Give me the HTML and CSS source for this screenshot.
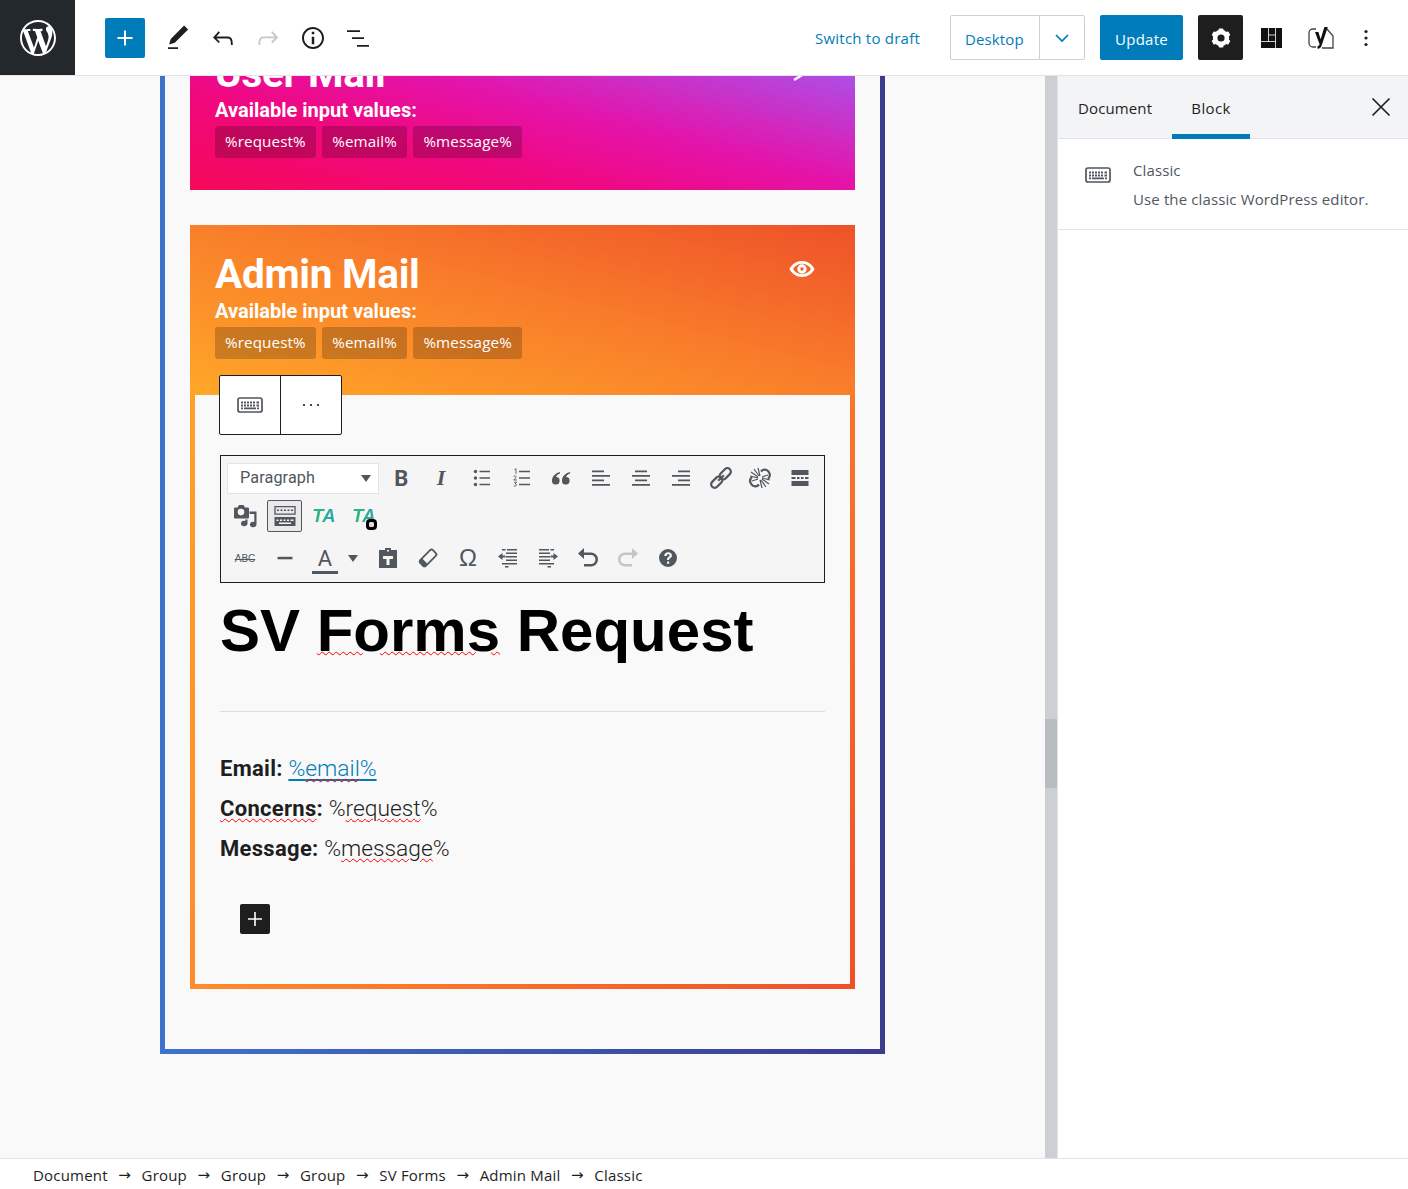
FILE: index.html
```html
<!DOCTYPE html>
<html lang="en">
<head>
<meta charset="utf-8">
<title>Edit Form</title>
<link rel="stylesheet" href="styles.css">
</head>
<body>
<header class="topbar">
  <a class="logo"><svg viewBox="0 0 20 20" width="36" height="36"><path fill="#fff" d="M20 10c0-5.51-4.49-10-10-10C4.48 0 0 4.49 0 10c0 5.52 4.48 10 10 10 5.51 0 10-4.48 10-10zM7.78 15.37L4.37 6.22c.55-.02 1.17-.08 1.17-.08.5-.06.44-1.13-.06-1.11 0 0-1.45.11-2.37.11-.18 0-.37 0-.58-.01C4.12 2.69 6.87 1.11 10 1.11c2.33 0 4.45.87 6.05 2.34-.68-.11-1.65.39-1.65 1.58 0 .74.45 1.36.9 2.1.35.61.55 1.36.55 2.46 0 1.49-1.4 5-1.4 5l-3.03-8.37c.54-.02.82-.17.82-.17.5-.05.44-1.25-.06-1.22 0 0-1.44.12-2.38.12-.87 0-2.33-.12-2.33-.12-.5-.03-.56 1.2-.06 1.22l.92.08 1.26 3.41zM17.41 10c.24-.64.74-1.87.43-4.25.7 1.29 1.05 2.71 1.05 4.25 0 3.29-1.73 6.24-4.4 7.78.97-2.59 1.94-5.2 2.92-7.78zM6.1 18.09C3.12 16.65 1.11 13.53 1.11 10c0-1.3.23-2.48.72-3.59C3.25 10.3 4.67 14.2 6.1 18.09zm4.03-6.63l2.58 6.98c-.86.29-1.76.45-2.71.45-.79 0-1.57-.11-2.29-.33.81-2.38 1.62-4.74 2.42-7.1z"/></svg></a>
  <div class="tools">
    <button class="inserter"><svg viewBox="0 0 24 24" width="30" height="30"><path fill="#fff" d="M18 11.2h-5.200V6h-1.600v5.200H6v1.600h5.200V18h1.600v-5.200H18z"/></svg></button>
    <span class="tool"><svg viewBox="0 0 24 24" width="30" height="30"><path d="M20.1 5.1L16.9 2 6.2 12.7l-1.3 4.4 4.5-1.3L20.1 5.1zM4 20.8h8v-1.5H4v1.500z"/></svg></span>
    <span class="tool"><svg viewBox="0 0 24 24" width="30" height="30"><path d="M18.3 11.7c-.6-.6-1.4-.9-2.3-.9H6.700l2.900-3.300-1.100-1-4.500 5L8.500 16l1-1-2.700-2.700H16c.5 0 .9.2 1.300.5 1 1 1 3.400 1 4.500v.3h1.500v-.2c0-1.500 0-4.300-1.500-5.700z"/></svg></span>
    <span class="tool is-off"><svg viewBox="0 0 24 24" width="30" height="30"><path d="M15.6 6.5l-1.1 1 2.900 3.300H8c-.9 0-1.700.3-2.300.9-1.400 1.500-1.400 4.200-1.400 5.600v.2h1.500v-.3c0-1.100 0-3.500 1-4.500.3-.3.7-.5 1.300-.5h9.200L14.500 15l1.100 1.100 4.600-4.600-4.600-5z"/></svg></span>
    <span class="tool"><svg viewBox="0 0 24 24" width="30" height="30"><path d="M12 3.2c-4.800 0-8.800 3.900-8.800 8.800 0 4.800 3.900 8.800 8.800 8.800 4.800 0 8.800-3.900 8.800-8.800 0-4.800-4-8.800-8.800-8.800zm0 16c-4 0-7.200-3.300-7.200-7.200C4.800 8 8 4.800 12 4.800s7.200 3.300 7.200 7.200c0 4-3.200 7.200-7.200 7.200zM11 17h2v-6h-2v6zm0-8h2V7h-2v2z"/></svg></span>
    <span class="tool"><svg viewBox="0 0 30 30" width="30" height="30"><path d="M4 7.200h13v1.700H4zM9 14.200h12v1.700H9zM14 22h12v1.700H14z"/></svg></span>
  </div>
  <div class="actions">
    <a class="draft">Switch to draft</a>
    <div class="preview"><span class="preview-label">Desktop</span><span class="preview-arrow"><svg viewBox="0 0 16 16" width="16" height="16"><path d="M2 5l6 6 6-6" fill="none" stroke="#007cba" stroke-width="1.700"/></svg></span></div>
    <button class="update">Update</button>
    <span class="settings"><svg viewBox="0 0 24 24" width="24" height="24"><g fill="#fff"><circle cx="12" cy="12" r="6" fill="none" stroke="#fff" stroke-width="4.400"/><rect x="9.600" y="2.400" width="4.800" height="19.200" rx="1"/><rect x="9.600" y="2.400" width="4.800" height="19.200" rx="1" transform="rotate(60 12 12)"/><rect x="9.600" y="2.400" width="4.800" height="19.200" rx="1" transform="rotate(120 12 12)"/></g><circle cx="12" cy="12" r="3.600" fill="#1e1e1e"/></svg></span>
    <span class="plugin-layout"><svg viewBox="0 0 21 20" width="21" height="20"><path fill="#111" d="M0 0h21v20H0z"/><path fill="none" stroke="#fff" stroke-width=".8" d="M7.500 0v13.500M14.500 0v20M0 13.500h14.500M7.500 7h7"/></svg></span>
    <span class="plugin-yoast"><svg viewBox="0 0 26 24" width="26" height="24"><path fill="none" stroke="#444" stroke-width="1.300" d="M8 3H5a4 4 0 0 0-4 4v10a4 4 0 0 0 4 4h3M19 3l6 7v12H14"/><path fill="#111" d="M7 6h3.400l2.200 7.200L16.400 1h3.400l-6 18c-.7 2.300-1.800 3.500-4.300 3.800v-2.600c1.100-.2 1.700-.8 2.100-1.900L7 6z"/></svg></span>
    <span class="more"><svg viewBox="0 0 6 20" width="6" height="20"><circle cx="3" cy="3.500" r="1.600"/><circle cx="3" cy="10" r="1.600"/><circle cx="3" cy="16.500" r="1.600"/></svg></span>
  </div>
</header>

<main class="main">
  <div class="canvas">
    <section class="outer">
      <article class="card">
        <div class="card-head card-head-pink">
          <div class="head-row">
            <h2 class="card-title">User Mail</h2>
            <svg class="eye" viewBox="0 0 26 16" width="26" height="16"><use href="#eye"/><path d="M18 12L5 20" stroke="#fff" stroke-width="2.500"/></svg>
          </div>
          <p class="card-sub">Available input values:</p>
          <div class="chips"><span class="chip">%request%</span><span class="chip">%email%</span><span class="chip">%message%</span></div>
        </div>
      </article>

      <article class="card card-admin">
        <div class="card-head card-head-orange">
          <div class="head-row">
            <h2 class="card-title">Admin Mail</h2>
            <svg class="eye" viewBox="0 0 26 16" width="26" height="16"><use href="#eye"/></svg>
          </div>
          <p class="card-sub">Available input values:</p>
          <div class="chips"><span class="chip">%request%</span><span class="chip">%email%</span><span class="chip">%message%</span></div>
        </div>
        <div class="card-body">
          <div class="block-toolbar">
            <span class="block-tool"><svg viewBox="0 0 26 16" width="26" height="16"><use href="#kbd"/></svg></span>
            <span class="block-tool"><svg viewBox="0 0 20 4" width="20" height="4"><circle cx="3" cy="2" r="1.100"/><circle cx="10" cy="2" r="1.100"/><circle cx="17" cy="2" r="1.100"/></svg></span>
          </div>

          <div class="mce">
            <div class="mce-row">
              <div class="mce-select"><span>Paragraph</span><i class="caret"></i></div>
              <span class="mi mi-b">B</span>
              <span class="mi mi-i">I</span>
              <span class="mi"><svg viewBox="0 0 20 20" width="20" height="20"><circle cx="3.500" cy="3.500" r="1.700"/><circle cx="3.500" cy="10" r="1.700"/><circle cx="3.500" cy="16.500" r="1.700"/><path d="M7.500 3.500H18M7.500 10H18M7.500 16.500H18" stroke="#50575e" stroke-width="1.400"/></svg></span>
              <span class="mi"><svg viewBox="0 0 20 20" width="20" height="20"><path d="M7 3.500h11M7 10h11M7 16.500h11" stroke="#50575e" stroke-width="1.400"/><path d="M2.500 1.500l1.500-.7v5M1.500 8.300c1.800-1.200 3.400.3 2 1.900L1.700 12H5M2 14.300h2.600l-1.300 1.500c1.600 0 1.800 2.800-1.500 2.200" fill="none" stroke="#50575e" stroke-width=".9"/></svg></span>
              <span class="mi"><svg viewBox="0 0 20 20" width="20" height="20"><path d="M9 4C5 5 1 8 1 12.500a3.800 3.800 0 1 0 4-3.500c.5-1.500 2-3 4-3.500zM19 4c-4 1-8 4-8 8.500a3.800 3.800 0 1 0 4-3.500c.5-1.500 2-3 4-3.500z"/></svg></span>
              <span class="mi"><svg viewBox="0 0 20 20" width="20" height="20"><path d="M1 2.500h12v1.800H1zM1 7h18v1.800H1zM1 11.500h12v1.800H1zM1 16h18v1.800H1z"/></svg></span>
              <span class="mi"><svg viewBox="0 0 20 20" width="20" height="20"><path d="M4 2.500h12v1.800H4zM1 7h18v1.800H1zM4 11.500h12v1.800H4zM1 16h18v1.800H1z"/></svg></span>
              <span class="mi"><svg viewBox="0 0 20 20" width="20" height="20"><path d="M7 2.500h12v1.800H7zM1 7h18v1.800H1zM7 11.500h12v1.800H7zM1 16h18v1.800H1z"/></svg></span>
              <span class="mi"><svg viewBox="0 0 22 22" width="22" height="22"><g fill="none" stroke="#50575e" stroke-width="2.200" transform="rotate(-45 11 11)"><rect x="-1.500" y="7.500" width="13" height="7" rx="3.500"/><rect x="10.500" y="7.500" width="13" height="7" rx="3.500"/><path d="M7 11h8"/></g></svg></span>
              <span class="mi"><svg viewBox="0 0 22 22" width="22" height="22"><g fill="none" stroke="#50575e" stroke-width="2.200"><path d="M3 10c-3 3-2 6 0 8s5 2 7-.5M19 12c3-3 2-6 0-8s-5-2-7 .5"/></g><path stroke="#50575e" stroke-width="1.200" d="M5 2l5 7M2 5l7 5M1 9l8 2M9 1l2 8M17 20l-5-7M20 17l-7-5M21 13l-8-2M13 21l-2-8M19 8l-6 2M3 14l6-2"/></svg></span>
              <span class="mi"><svg viewBox="0 0 20 20" width="20" height="20"><path d="M1.500 2h17v5h-17zM1.500 13h17v5h-17zM1.500 9h4v2h-4zM7 9h2.500v2H7zM11 9h2.500v2H11zM15 9h3.500v2H15z"/></svg></span>
            </div>
            <div class="mce-row">
              <span class="mi"><svg viewBox="0 0 24 22" width="24" height="22"><path fill-rule="evenodd" d="M1.500 2.500h3L6 0h4.500l1.500 2.500h3a1 1 0 0 1 1 1V12.500a1 1 0 0 1-1 1h-13a1 1 0 0 1-1-1v-9a1 1 0 0 1 1-1zM8 3.800a3.300 3.300 0 1 0 0 6.600 3.300 3.300 0 0 0 0-6.600z"/><path d="M16.500 6.500h7v13a3.300 2.800 0 1 1-2.200-2.600V9h-4.800z"/><path d="M14.500 18.500a3.300 2.800 0 1 1-2.200-2.600V14.500h2.200z"/></svg></span>
              <span class="mi mi-on"><svg viewBox="0 0 24 24" width="24" height="24"><path fill="none" stroke="#50575e" stroke-width="1.300" d="M2 2.600h20v7.500H2z"/><path d="M1.500 13h21v9h-21z"/><path fill="#f5f5f5" d="M3.500 15.500h2v1.500h-2zM7 15.500h2v1.500H7zM10.500 15.500h2v1.500h-2zM14 15.500h2v1.500h-2zM17.500 15.500h3v1.500h-3zM6 18.500h12v1.500H6z"/><path d="M4 5.500h2v1.500H4zM7.500 5.500h2v1.500h-2zM11 5.500h2v1.500h-2zM14.500 5.500h2v1.500h-2zM18 5.500h2v1.500h-2z"/></svg></span>
              <span class="mi mi-ta"><span class="ta-text">TA</span></span>
              <span class="mi mi-ta"><span class="ta-text">TA</span><i class="ta-badge"></i></span>
            </div>
            <div class="mce-row mce-row-last">
              <span class="mi mi-abc">ABC</span>
              <span class="mi"><svg viewBox="0 0 20 20" width="20" height="20"><path d="M2.500 8.800h15v2.500h-15z"/></svg></span>
              <span class="mi mi-a">A</span>
              <i class="caret caret-a"></i>
              <span class="mi"><svg viewBox="0 0 22 22" width="22" height="22"><path fill-rule="evenodd" d="M8 1h6v2h6v18H2V3h6zM10 3v1.500h2V3zM6 9v3h3.500v6h3v-6H16V9z"/></svg></span>
              <span class="mi"><svg viewBox="0 0 22 22" width="22" height="22"><g transform="rotate(-45 11 11)"><rect x="2" y="7" width="18" height="8" rx="2" fill="none" stroke="#50575e" stroke-width="1.800"/><path d="M2 7h4.500v8H2z"/></g></svg></span>
              <span class="mi mi-omega">Ω</span>
              <span class="mi"><svg viewBox="0 0 22 22" width="22" height="22"><use href="#outdent"/></svg></span>
              <span class="mi"><svg viewBox="0 0 22 22" width="22" height="22"><use href="#outdent" transform="matrix(-1 0 0 1 22 0)"/></svg></span>
              <span class="mi"><svg viewBox="0 0 24 24" width="24" height="24"><path d="M8 2L2 7.500 8 13V9h7a4.500 4.500 0 0 1 0 9H8v2.500h7A7 7 0 0 0 15 6.500H8z"/></svg></span>
              <span class="mi is-off"><svg viewBox="0 0 24 24" width="24" height="24"><path d="M16 2l6 5.500-6 5.500V9H9a4.500 4.500 0 0 0 0 9h7v2.500H9A7 7 0 0 1 9 6.500h7z"/></svg></span>
              <span class="mi"><svg viewBox="0 0 20 20" width="20" height="20"><path fill-rule="evenodd" d="M10 1a9 9 0 1 0 0 18 9 9 0 0 0 0-18zM9 13.500h2.200v2.200H9zM6.200 8C6.200 5.700 7.800 4.300 10.200 4.300c2.300 0 3.700 1.300 3.700 3.100 0 1.300-.7 2.200-1.800 2.900-.8.500-1 .8-1 1.700H9c0-1.500.3-2.200 1.400-2.900.8-.5 1.200-1 1.200-1.600 0-.8-.6-1.300-1.400-1.300-.9 0-1.500.6-1.600 1.800z"/></svg></span>
            </div>
          </div>

          <h1 class="doc-title">SV <span class="spell spell-big">Forms</span> Request</h1>
          <hr class="doc-rule">
          <p class="doc-line"><b>Email:</b> <a class="doc-link">%<span class="spell">email</span>%</a></p>
          <p class="doc-line"><b class="spell">Concerns</b><b>:</b> %<span class="spell">request</span>%</p>
          <p class="doc-line"><b>Message:</b> %<span class="spell">message</span>%</p>
          <button class="add-block"><svg viewBox="0 0 24 24" width="24" height="24"><path fill="#fff" d="M19 11.200h-6.200V5h-1.600v6.200H5v1.600h6.200V19h1.600v-6.200H19z"/></svg></button>
        </div>
      </article>
    </section>
  </div>
  <div class="scrollbar"><div class="scroll-thumb"></div></div>
  <aside class="sidebar">
    <div class="tabs">
      <span class="tab">Document</span>
      <span class="tab tab-active">Block</span>
      <span class="close"><svg viewBox="0 0 20 20" width="20" height="20"><path d="M1.500 1.500l17 17M18.500 1.500l-17 17" stroke="#1e1e1e" stroke-width="1.700"/></svg></span>
    </div>
    <div class="block-card">
      <svg class="block-card-icon" viewBox="0 0 26 16" width="26" height="16"><use href="#kbd"/></svg>
      <div>
        <p class="block-card-title">Classic</p>
        <p class="block-card-desc">Use the classic WordPress editor.</p>
      </div>
    </div>
  </aside>
</main>

<footer class="crumbs">
  <span>Document</span><i>→</i><span>Group</span><i>→</i><span>Group</span><i>→</i><span>Group</span><i>→</i><span>SV Forms</span><i>→</i><span>Admin Mail</span><i>→</i><span>Classic</span>
</footer>

<svg class="defs" width="0" height="0"><defs>
  <g id="kbd" fill="#50575e"><rect x="1" y="1" width="24" height="14" rx="2" fill="none" stroke="#50575e" stroke-width="1.700"/><path d="M4 4.500h2v2H4zM7 4.500h2v2H7zM10 4.500h2v2h-2zM13 4.500h2v2h-2zM16 4.500h2v2h-2zM19.500 4.500h2.500v2h-2.500zM4 7.500h2v2H4zM7 7.500h2v2H7zM10 7.500h2v2h-2zM13 7.500h2v2h-2zM16 7.500h2v2h-2zM19.500 7.500h2.500v2h-2.500zM4 10.500h2v1.800H4zM7 10.500h12v1.800H7zM20 10.500h2v1.800h-2z"/></g>
  <path id="eye" fill="#fff" fill-rule="evenodd" d="M13 0C7.500 0 3 3.200.4 8 3 12.800 7.500 16 13 16s10-3.200 12.600-8C23 3.200 18.500 0 13 0zM13 2.800c-3.800 0-7 2-9 5.200 2 3.200 5.200 5.200 9 5.200s7-2 9-5.200c-2-3.200-5.200-5.200-9-5.200zM13 3.300a4.700 4.700 0 1 0 0 9.400 4.700 4.700 0 0 0 0-9.400zM13 6.300a1.700 1.700 0 1 1 0 3.400 1.700 1.700 0 0 1 0-3.400z"/>
  <path id="outdent" d="M5 2h3.500v1.600H5zM10 2h10v1.600H10zM9 5.500h11v1.600H9zM9 9h11v1.600H9zM9 12.500h11v1.600H9zM5 16h15v1.600H5zM8 19h3.500v1.600H8zM1 9.500L5.500 6v2.500h3v2h-3V13z"/>
</defs></svg>
</body>
</html>
```
FILE: styles.css
```css
* { box-sizing: border-box; }
html, body { margin: 0; height: 100%; }
body {
  display: flex;
  flex-direction: column;
  height: 100vh;
  overflow: hidden;
  font-family: "Open Sans", "Noto Sans", sans-serif;
  font-size: 15px;
  letter-spacing: .12px;
  color: #1e1e1e;
  background: #fff;
}
p, h1, h2 { margin: 0; }
button { border: 0; padding: 0; cursor: pointer; font: inherit; letter-spacing: inherit; }
svg { display: block; overflow: visible; }
.defs { position: absolute; }

/* top bar */
.topbar {
  flex: none;
  height: 76px;
  display: flex;
  align-items: center;
  background: #fff;
  border-bottom: 1px solid #e2e4e7;
}
.logo {
  width: 75px;
  height: 75px;
  background: #23282d;
  display: flex;
  align-items: center;
  justify-content: center;
}
.tools { display: flex; align-items: center; margin-left: 30px; }
.inserter {
  width: 40px;
  height: 40px;
  border-radius: 2px;
  background: #007cba;
  display: flex;
  align-items: center;
  justify-content: center;
  margin-right: 10px;
}
.tool { width: 45px; display: flex; justify-content: center; fill: #1e1e1e; }
.tool.is-off { fill: #c5c9cc; }
.actions { margin-left: auto; display: flex; align-items: center; }
.draft { color: #007cba; margin-right: 30px; letter-spacing: .23px; }
.preview {
  display: flex;
  height: 45px;
  width: 135px;
  border: 1px solid #ccd0d4;
  border-radius: 2px;
  color: #007cba;
  margin-right: 15px;
}
.preview-label { width: 89px; padding-left: 14px; line-height: 47px; border-right: 1px solid #ccd0d4; }
.preview-arrow { flex: 1; display: flex; align-items: center; justify-content: center; }
.update {
  width: 83px;
  height: 45px;
  border-radius: 2px;
  background: #007cba;
  color: #fff;
  font-weight: 500;
  letter-spacing: .25px;
  margin-right: 15px;
  padding-top: 2px;
}
.settings {
  width: 45px;
  height: 45px;
  border-radius: 2px;
  background: #1e1e1e;
  display: flex;
  align-items: center;
  justify-content: center;
  margin-right: 18px;
}
.plugin-layout { margin-right: 26px; }
.plugin-yoast { margin-right: 29px; }
.more { margin-right: 39px; fill: #1e1e1e; }

/* main */
.main { flex: 1; display: flex; min-height: 0; }
.canvas { width: 1045px; background: #f9f9f9; overflow: hidden; }
.outer {
  width: 725px;
  margin: -60px 0 0 160px;
  padding: 3px 25px 60px;
  border: 5px solid;
  border-image: linear-gradient(90deg, #3f72cd, #3c3c8e) 1;
}
.card-admin { margin-top: 35px; }
.card-head { padding: 24px 40px 32px 25px; color: #fff; }
.card-head-pink { background: linear-gradient(to top right, #f5095a 0%, #f0087f 30%, #e413aa 52%, #a855ec 88%); }
.card-head-orange { padding-bottom: 36px; background: linear-gradient(to top right, #ffa728 0%, #f97f2a 50%, #ee5129 100%); }
.head-row { display: flex; justify-content: space-between; align-items: flex-start; height: 50px; }
.card-title { font: 700 40.6px/50px Roboto, sans-serif; letter-spacing: -.3px; }
.eye { margin-top: 12px; }
.card-sub { font: 700 20px/24px Roboto, sans-serif; letter-spacing: 0; }
.chips { display: flex; gap: 6.5px; margin-top: 4px; }
.chip {
  height: 32px;
  line-height: 30px;
  padding: 0 10px;
  border-radius: 3px;
  background: rgba(0, 0, 0, .2);
  font-size: 15.2px;
}
.card-body {
  position: relative;
  padding: 60px 25px 50px;
  border: 5px solid;
  border-top: 0;
  border-image: linear-gradient(125deg, #ffa029, #ff8a2b 40%, #ee5129) 1;
  background: #f9f9f9;
}
.block-toolbar {
  position: absolute;
  left: 24px;
  top: -20px;
  display: flex;
  height: 60px;
  background: #fff;
  border: 1px solid #1e1e1e;
  border-radius: 2px;
}
.block-tool { width: 60px; display: flex; align-items: center; justify-content: center; fill: #1e1e1e; }
.block-tool + .block-tool { width: 61px; border-left: 1px solid #1e1e1e; }

/* classic editor toolbar */
.mce {
  height: 128px;
  padding: 3px 4px 0;
  border: 1px solid #1e1e1e;
  background: #f5f5f5;
  fill: #50575e;
  color: #50575e;
}
.mce-row { display: flex; align-items: center; height: 38px; }
.mce-row-last { margin-top: 4px; }
.mce-select {
  width: 153px;
  height: 31px;
  margin: 0 3px 0 2px;
  padding: 1px 7px 0 12px;
  display: flex;
  align-items: center;
  justify-content: space-between;
  background: #fff;
  border: 1px solid #e2e4e7;
  font: 16.2px/1 Roboto, sans-serif;
  color: #50575e;
}
.caret { width: 0; height: 0; border: 5.5px solid transparent; border-top: 7px solid #50575e; border-bottom: 0; }
.caret-a { margin: 0 10px 0 3px; }
.mi {
  position: relative;
  width: 40px;
  height: 32px;
  display: flex;
  align-items: center;
  justify-content: center;
  line-height: 1;
}
.mi.is-off { fill: #c3c6c9; }
.mi-on {
  width: 35px;
  margin: 0 2px;
  background: #e9e9e9;
  border: 1px solid #50575e;
  border-radius: 2px;
}
.mi-b { font: 700 22px Roboto, sans-serif; margin-left: -1px; margin-right: 1px; }
.mi-i { font: italic 700 22px "Liberation Serif", serif; margin-left: -1px; margin-right: 1px; }
.ta-text {
  font: italic 700 18.5px "Liberation Sans", sans-serif;
  background: linear-gradient(90deg, #2eb37c 40%, #2a9fbe);
  -webkit-background-clip: text;
  background-clip: text;
  color: transparent;
}
.ta-badge {
  position: absolute;
  right: 7px;
  bottom: 2px;
  width: 11px;
  height: 11px;
  border-radius: 4px;
  background: #000;
  border: 3px solid #000;
  box-shadow: inset 0 0 0 3px #ddd;
}
.mi-abc { font: 10px "Liberation Sans", sans-serif; letter-spacing: 0; text-decoration: line-through; }
.mi-a { font: 22px Roboto, sans-serif; }
.mi-a::after {
  content: "";
  position: absolute;
  left: 7px;
  right: 7px;
  bottom: 0;
  height: 3px;
  background: #50575e;
}
.mi-omega { font: 24px "Liberation Sans", sans-serif; }

/* document */
.doc-title {
  margin-top: 13px;
  font: 700 60px/70px "Liberation Sans", Arial, sans-serif;
  letter-spacing: 0;
  color: #000;
}
.doc-rule { margin: 45px 0 36px; border: 0; border-top: 1px solid #ddd; }
.doc-line { height: 40px; font: 300 22.8px/42px Roboto, sans-serif; letter-spacing: 0; color: #1e1e1e; }
.doc-line b { font-size: 22px; font-weight: 700; letter-spacing: .3px; }
.doc-link { color: #007cba; text-decoration: underline 2px #007cba; text-underline-offset: 3px; }
.spell { text-decoration: underline wavy #f00 1px; text-underline-offset: 2px; }
.spell-big { text-underline-offset: 0; }
.add-block {
  display: flex;
  align-items: center;
  justify-content: center;
  width: 30px;
  height: 30px;
  margin: 36px 0 0 20px;
  border-radius: 2px;
  background: #1e1e1e;
}

/* editor scrollbar */
.scrollbar { width: 12px; background: #ccd0d4; }
.scroll-thumb { height: 69px; margin-top: 643px; background: #b8bdbf; }

/* sidebar */
.sidebar { width: 351px; background: #fff; border-left: 1px solid #e2e4e7; }
.tabs {
  height: 63px;
  display: flex;
  align-items: stretch;
  background: #f3f4f5;
  border-bottom: 1px solid #e2e4e7;
  padding-left: 20px;
}
.tab { line-height: 65px; color: #1e1e1e; }
.tab-active {
  width: 78px;
  margin-left: 20px;
  text-align: center;
  margin-bottom: -1px;
  box-shadow: inset 0 -5px 0 #007cba;
  font-weight: 500;
  letter-spacing: .4px;
}
.close { margin-left: auto; margin-right: 17px; align-self: center; }
.block-card {
  height: 91px;
  display: flex;
  gap: 22px;
  padding: 19px 27px;
  border-bottom: 1px solid #e2e4e7;
  color: #50575e;
}
.block-card-icon { margin-top: 9px; }
.block-card-title { line-height: 24px; font-weight: 500; }
.block-card-desc { margin-top: 5px; line-height: 24px; }

/* breadcrumbs */
.crumbs {
  flex: none;
  height: 31px;
  display: flex;
  align-items: center;
  padding: 1px 0 0 33px;
  background: #fff;
  border-top: 1px solid #e2e4e7;
  letter-spacing: .2px;
}
.crumbs i { font-style: normal; width: 33.8px; text-align: center; font-family: "DejaVu Sans", sans-serif; font-size: 15px; letter-spacing: 0; }
```
